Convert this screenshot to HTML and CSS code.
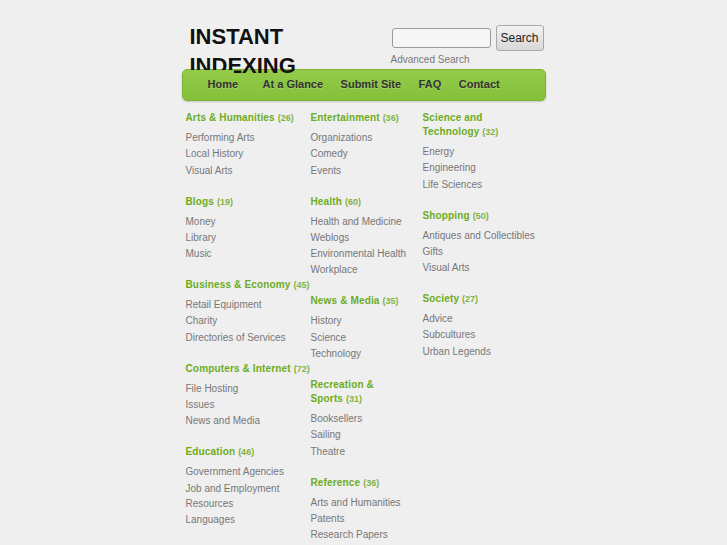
FILE: index.html
```html
<!DOCTYPE html>
<html>
<head>
<meta charset="utf-8">
<title>Instant Indexing</title>
<link rel="stylesheet" href="styles.css">
</head>
<body>
<div class="page">
  <header class="header">
    <div class="logo">INSTANT INDEXING</div>
    <div class="search">
      <div class="search-row">
        <input class="search-input" type="text">
        <button class="search-btn">Search</button>
      </div>
      <a class="adv" href="#">Advanced Search</a>
    </div>
  </header>
  <nav class="nav">
    <a class="nav-link home" href="#">Home</a>
    <a class="nav-link" href="#">At a Glance</a>
    <a class="nav-link" href="#">Submit Site</a>
    <a class="nav-link" href="#">FAQ</a>
    <a class="nav-link" href="#">Contact</a>
  </nav>
  <main class="cats">
    <div class="col col1">
      <section class="cat">
        <h3>Arts &amp; Humanities <span class="n">(26)</span></h3>
        <ul><li>Performing Arts</li><li>Local History</li><li>Visual Arts</li></ul>
      </section>
      <section class="cat">
        <h3>Blogs <span class="n">(19)</span></h3>
        <ul><li>Money</li><li>Library</li><li>Music</li></ul>
      </section>
      <section class="cat">
        <h3>Business &amp; Economy <span class="n">(45)</span></h3>
        <ul><li>Retail Equipment</li><li>Charity</li><li>Directories of Services</li></ul>
      </section>
      <section class="cat">
        <h3>Computers &amp; Internet <span class="n">(72)</span></h3>
        <ul><li>File Hosting</li><li>Issues</li><li>News and Media</li></ul>
      </section>
      <section class="cat">
        <h3>Education <span class="n">(46)</span></h3>
        <ul><li>Government Agencies</li><li>Job and Employment Resources</li><li>Languages</li></ul>
      </section>
    </div>
    <div class="col col2">
      <section class="cat">
        <h3>Entertainment <span class="n">(36)</span></h3>
        <ul><li>Organizations</li><li>Comedy</li><li>Events</li></ul>
      </section>
      <section class="cat">
        <h3>Health <span class="n">(60)</span></h3>
        <ul><li>Health and Medicine</li><li>Weblogs</li><li>Environmental Health</li><li>Workplace</li></ul>
      </section>
      <section class="cat">
        <h3>News &amp; Media <span class="n">(35)</span></h3>
        <ul><li>History</li><li>Science</li><li>Technology</li></ul>
      </section>
      <section class="cat">
        <h3>Recreation &amp; Sports <span class="n">(31)</span></h3>
        <ul><li>Booksellers</li><li>Sailing</li><li>Theatre</li></ul>
      </section>
      <section class="cat">
        <h3>Reference <span class="n">(36)</span></h3>
        <ul><li>Arts and Humanities</li><li>Patents</li><li>Research Papers</li></ul>
      </section>
    </div>
    <div class="col col3">
      <section class="cat">
        <h3>Science and Technology <span class="n">(32)</span></h3>
        <ul><li>Energy</li><li>Engineering</li><li>Life Sciences</li></ul>
      </section>
      <section class="cat">
        <h3>Shopping <span class="n">(50)</span></h3>
        <ul><li>Antiques and Collectibles</li><li>Gifts</li><li>Visual Arts</li></ul>
      </section>
      <section class="cat">
        <h3>Society <span class="n">(27)</span></h3>
        <ul><li>Advice</li><li>Subcultures</li><li>Urban Legends</li></ul>
      </section>
    </div>
  </main>
</div>
</body>
</html>
```
FILE: styles.css
```css
html, body {
  margin: 0;
  padding: 0;
  background: #efefef;
  font-family: "Liberation Sans", Arial, sans-serif;
}
.page {
  width: 364px;
  margin: 0 auto;
}
.header {
  height: 69px;
  display: flex;
  justify-content: space-between;
  align-items: flex-start;
}
.logo {
  position: relative;
  z-index: 2;
  width: 110px;
  margin: 22px 0 0 8px;
  font-size: 22px;
  line-height: 29px;
  font-weight: bold;
  color: #111;
}
.search {
  margin: 25px 2px 0 0;
  display: flex;
  flex-direction: column;
}
.search-row {
  display: flex;
  align-items: center;
  gap: 5px;
  margin-left: 2px;
}
.search-input {
  box-sizing: border-box;
  width: 99px;
  height: 20px;
  margin: 0;
  border: 1px solid #9a9a9a;
  border-radius: 3px;
  background: #f6f6f6;
  padding: 0 3px;
}
.search-btn {
  box-sizing: border-box;
  width: 48px;
  height: 26px;
  margin: 0;
  padding: 0;
  border: 1px solid #a8a8a8;
  border-radius: 3px;
  background: linear-gradient(#f2f2f2, #d8d8d8);
  font-family: "Liberation Sans", Arial, sans-serif;
  font-size: 12px;
  color: #222;
}
.adv {
  margin-top: 3px;
  margin-left: 1px;
  font-size: 10px;
  line-height: 12px;
  color: #777;
  text-decoration: none;
}
.nav {
  position: relative;
  box-sizing: border-box;
  height: 32px;
  display: flex;
  align-items: center;
  gap: 17.5px;
  padding-left: 25px;
  padding-bottom: 2px;
  border: 1px solid #7cb534;
  border-radius: 5px;
  background: linear-gradient(#93cb48, #86c03b);
  box-shadow: 0 1px 2px rgba(0, 0, 0, 0.18);
}
.nav::before {
  content: "";
  position: absolute;
  z-index: 3;
  left: 0;
  top: 0;
  width: 51px;
  height: 100%;
  border-top-left-radius: 4px;
  border-bottom-left-radius: 4px;
  background: linear-gradient(#93cb48, #86c03b);
}
.nav-link {
  position: relative;
  z-index: 4;
  font-size: 11px;
  font-weight: bold;
  color: #333;
  text-decoration: none;
  text-shadow: 0 1px 0 rgba(255, 255, 255, 0.25);
}
.home {
  margin-right: 7px;
}
.cats {
  display: grid;
  grid-template-columns: 125px 112px 1fr;
  padding: 10px 0 0 4px;
}
.col2 { max-width: 96px; }
.col3 { max-width: 114px; }
.cat {
  margin-bottom: 17px;
}
.cat h3 {
  margin: 0 0 5px;
  font-size: 10px;
  line-height: 14px;
  font-weight: bold;
  letter-spacing: 0.15px;
  color: #6dac1d;
}
.cat h3 .n {
  font-size: 9px;
  line-height: 1;
  letter-spacing: 0;
  color: #84b342;
}
.cat ul {
  list-style: none;
  margin: 0;
  padding: 0;
}
.cat li {
  font-size: 10px;
  line-height: 15px;
  margin-bottom: 1.3px;
  color: #777;
}
```
